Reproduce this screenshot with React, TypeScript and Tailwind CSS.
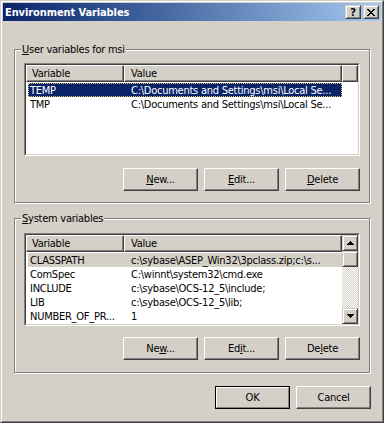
import React from "react";

type Row = [string, string];

const rows1: Row[] = [
  ["TEMP", "C:\\Documents and Settings\\msi\\Local Se..."],
  ["TMP", "C:\\Documents and Settings\\msi\\Local Se..."],
];

const rows2: Row[] = [
  ["CLASSPATH", "c:\\sybase\\ASEP_Win32\\3pclass.zip;c:\\s..."],
  ["ComSpec", "C:\\winnt\\system32\\cmd.exe"],
  ["INCLUDE", "c:\\sybase\\OCS-12_5\\include;"],
  ["LIB", "c:\\sybase\\OCS-12_5\\lib;"],
  ["NUMBER_OF_PR...", "1"],
];

function Btn({ children, isDefault }: { children: React.ReactNode; isDefault?: boolean }) {
  if (isDefault) {
    return (
      <div className="w-[75px] h-[23px] border border-black">
        <div className="w-full h-full flex items-center justify-center border border-t-white border-l-white border-r-[#808080] border-b-[#808080]">
          {children}
        </div>
      </div>
    );
  }
  return (
    <div className="w-[75px] h-[23px] flex items-center justify-center border border-t-white border-l-white border-r-[#404040] border-b-[#404040] shadow-[inset_-1px_-1px_0_#808080]">
      {children}
    </div>
  );
}

function HeaderCell({ className, children }: { className: string; children?: React.ReactNode }) {
  return (
    <div
      className={
        "h-full flex items-center whitespace-nowrap overflow-hidden border border-t-white border-l-white border-r-[#404040] border-b-[#404040] shadow-[inset_-1px_-1px_0_#808080] " +
        className
      }
    >
      {children}
    </div>
  );
}

function ArrowBtn({ dir }: { dir: "up" | "down" }) {
  return (
    <div className="w-[16px] h-[16px] shrink-0 flex items-center justify-center border border-t-[#d4d0c8] border-l-[#d4d0c8] border-r-[#404040] border-b-[#404040] shadow-[inset_1px_1px_0_#fff,inset_-1px_-1px_0_#808080] bg-[#d4d0c8]">
      <svg width="7" height="4" viewBox="0 0 7 4" shapeRendering="crispEdges">
        {dir === "up" ? (
          <path d="M3 0h1v1h-1z M2 1h3v1h-3z M1 2h5v1h-5z M0 3h7v1h-7z" fill="#000" />
        ) : (
          <path d="M0 0h7v1h-7z M1 1h5v1h-5z M2 2h3v1h-3z M3 3h1v1h-1z" fill="#000" />
        )}
      </svg>
    </div>
  );
}

function ScrollBar() {
  return (
    <div className="w-[16px] h-full shrink-0 flex flex-col">
      <ArrowBtn dir="up" />
      <div className="w-[16px] h-[16px] shrink-0 border border-t-[#d4d0c8] border-l-[#d4d0c8] border-r-[#404040] border-b-[#404040] shadow-[inset_1px_1px_0_#fff,inset_-1px_-1px_0_#808080] bg-[#d4d0c8]" />
      <div className="flex-1 bg-[image:repeating-conic-gradient(#ffffff_0%_25%,#d4d0c8_0%_50%)] bg-[length:2px_2px]" />
      <ArrowBtn dir="down" />
    </div>
  );
}

function ListView({ rows, sel, focused, scroll }: { rows: Row[]; sel: number; focused: boolean; scroll?: boolean }) {
  return (
    <div className="w-[336px] h-[93px] shrink-0 border border-t-[#808080] border-l-[#808080] border-r-white border-b-white">
      <div className="w-full h-full border border-t-[#404040] border-l-[#404040] border-r-[#d4d0c8] border-b-[#d4d0c8] bg-white flex overflow-hidden">
        <div className="flex-1 min-w-0 flex flex-col">
          <div className="flex h-[17px] shrink-0 bg-[#d4d0c8]">
            <HeaderCell className="w-[98px] pl-[5px]">Variable</HeaderCell>
            <HeaderCell className="w-[218px] pl-[6px]">Value</HeaderCell>
            {!scroll && <HeaderCell className="flex-1" />}
          </div>
          <div className="pt-px flex flex-col">
            {rows.map((r, i) => {
              const isSel = i === sel;
              const rowCls = isSel
                ? focused
                  ? "bg-[#0a246a] text-white outline outline-1 outline-dotted outline-offset-[-1px] outline-[#e6c35c]"
                  : "bg-[#d4d0c8] text-black"
                : "text-black";
              return (
                <div key={i} className={"ml-[2px] w-[314px] h-[14px] flex items-center whitespace-nowrap " + rowCls}>
                  <div className="w-[96px] pl-[2px] overflow-hidden">{r[0]}</div>
                  <div className="flex-1 min-w-0 pl-[7px] overflow-hidden">{r[1]}</div>
                </div>
              );
            })}
          </div>
        </div>
        {scroll && <ScrollBar />}
      </div>
    </div>
  );
}

function Group({
  label,
  className,
  children,
}: {
  label: React.ReactNode;
  className: string;
  children: React.ReactNode;
}) {
  return (
    <div
      className={
        "relative w-[356px] shrink-0 border border-[#808080] shadow-[inset_1px_1px_0_#fff,1px_1px_0_#fff] px-[9px] flex flex-col " +
        className
      }
    >
      <div className="absolute left-[6px] top-[-7px] px-[1px] bg-[#d4d0c8] leading-[13px] whitespace-nowrap">{label}</div>
      {children}
    </div>
  );
}

export default function App() {
  return (
    <div className="w-[384px] h-[423px] bg-[#d4d0c8] border border-t-[#d4d0c8] border-l-[#d4d0c8] border-r-[#404040] border-b-[#404040] text-[11px] leading-[13px] tracking-[-0.25px] text-black font-['DejaVu_Sans_Condensed','DejaVu_Sans',sans-serif] overflow-hidden">
      <div className="w-full h-full border border-t-white border-l-white border-r-[#808080] border-b-[#808080] p-px flex flex-col">
        {/* Title bar */}
        <div className="h-[18px] shrink-0 flex items-center bg-linear-to-r from-[#0a246a] to-[#a6caf0] pl-[2px] pr-[2px]">
          <div className="flex-1 text-white font-bold whitespace-nowrap tracking-[-0.1px]">Environment Variables</div>
          <div className="flex gap-[2px]">
            <div className="w-[16px] h-[14px] flex items-center justify-center border border-t-[#d4d0c8] border-l-[#d4d0c8] border-r-[#404040] border-b-[#404040] shadow-[inset_1px_1px_0_#fff,inset_-1px_-1px_0_#808080] bg-[#d4d0c8] font-bold text-[11px] leading-[11px]">
              ?
            </div>
            <div className="w-[16px] h-[14px] flex items-center justify-center border border-t-[#d4d0c8] border-l-[#d4d0c8] border-r-[#404040] border-b-[#404040] shadow-[inset_1px_1px_0_#fff,inset_-1px_-1px_0_#808080] bg-[#d4d0c8]">
              <svg width="8" height="7" viewBox="0 0 8 7" shapeRendering="crispEdges">
                <path
                  d="M0 0h2v1h-2z M6 0h2v1h-2z M1 1h2v1h-2z M5 1h2v1h-2z M2 2h4v1h-4z M3 3h2v1h-2z M2 4h4v1h-4z M1 5h2v1h-2z M5 5h2v1h-2z M0 6h2v1h-2z M6 6h2v1h-2z"
                  fill="#000"
                />
              </svg>
            </div>
          </div>
        </div>

        {/* Body */}
        <div className="pl-[11px] pt-[28px] flex flex-col">
          <Group
            className="h-[154px] pt-[13px]"
            label={
              <>
                <u>U</u>ser variables for msi
              </>
            }
          >
            <ListView rows={rows1} sel={0} focused />
            <div className="mt-[12px] flex justify-end gap-[6px]">
              <Btn>
                <span><u>N</u>ew...</span>
              </Btn>
              <Btn>
                <span><u>E</u>dit...</span>
              </Btn>
              <Btn>
                <span><u>D</u>elete</span>
              </Btn>
            </div>
          </Group>

          <Group
            className="h-[155px] pt-[14px] mt-[15px]"
            label={
              <>
                <u>S</u>ystem variables
              </>
            }
          >
            <ListView rows={rows2} sel={0} focused={false} scroll />
            <div className="mt-[11px] flex justify-end gap-[6px]">
              <Btn>
                <span>Ne<u>w</u>...</span>
              </Btn>
              <Btn>
                <span>Ed<u>i</u>t...</span>
              </Btn>
              <Btn>
                <span>De<u>l</u>ete</span>
              </Btn>
            </div>
          </Group>

          <div className="w-[357px] mt-[13px] flex justify-end gap-[6px]">
            <Btn isDefault>OK</Btn>
            <Btn>Cancel</Btn>
          </div>
        </div>
      </div>
    </div>
  );
}
